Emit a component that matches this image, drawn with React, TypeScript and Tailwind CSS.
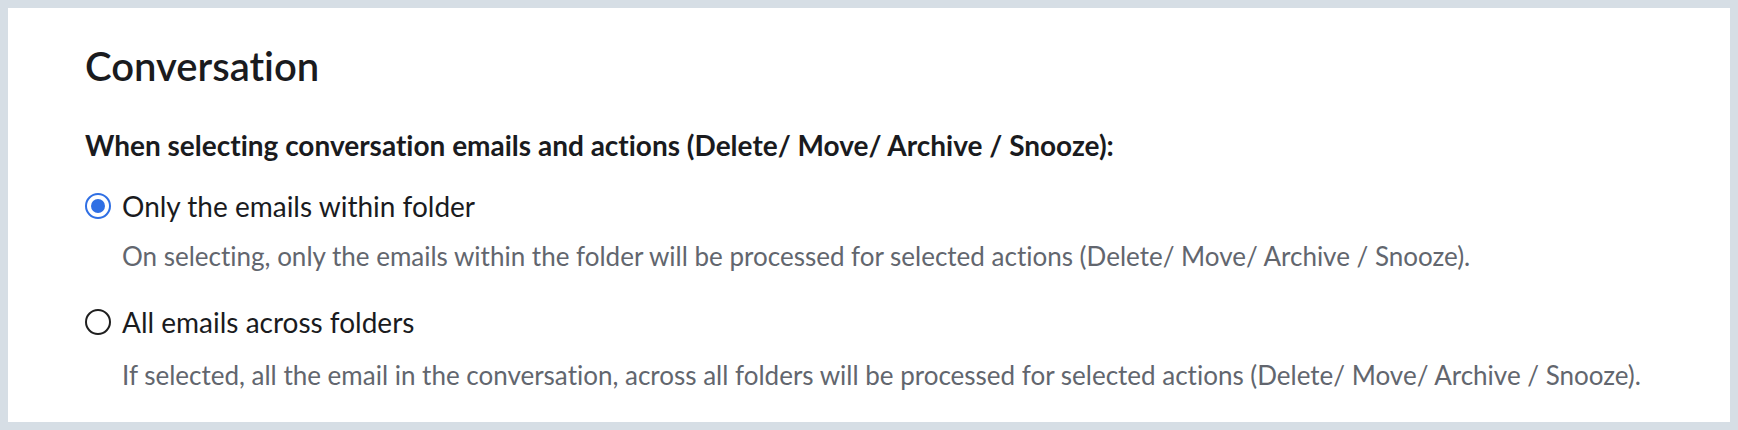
import React from "react";

function Radio({ checked }: { checked: boolean }) {
  return (
    <span
      className={
        "flex h-[26px] w-[26px] shrink-0 items-center justify-center rounded-full border-2 " +
        (checked ? "border-[#2f6fe4]" : "border-[#1f1f1f]")
      }
    >
      {checked && <span className="block h-[14px] w-[14px] rounded-full bg-[#2f6fe4]" />}
    </span>
  );
}

export default function App() {
  return (
    <div
      className="h-[430px] w-[1738px] bg-[#d6dee5] p-2 [font-variant-ligatures:none]"
      style={{ fontFamily: "Lato, 'Open Sans', sans-serif" }}
    >
      <div className="h-full w-full bg-white pl-[77px] pt-[34px]">
        <h1 className="text-[40px] font-semibold leading-[48px] text-[#1a1b1e]">Conversation</h1>
        <p className="mt-[38px] text-[28px] font-bold leading-[34px] text-[#1a1b1e]">
          When selecting conversation emails and actions (Delete/ Move/ Archive / Snooze):
        </p>
        <div className="mt-[27px] flex flex-col">
          <label className="flex items-center gap-[11px] text-[28px] leading-[34px] text-[#1a1b1e]">
            <Radio checked />
            <span>Only the emails within folder</span>
          </label>
          <p className="mt-[17px] pl-[37px] text-[26px] leading-[32px] text-[#62666e]">
            On selecting, only the emails within the folder will be processed for selected actions (Delete/ Move/ Archive / Snooze).
          </p>
          <label className="mt-[33px] flex items-center gap-[11px] text-[28px] leading-[34px] text-[#1a1b1e]">
            <Radio checked={false} />
            <span>All emails across folders</span>
          </label>
          <p className="mt-[20px] pl-[37px] text-[26px] leading-[32px] text-[#62666e]">
            If selected, all the email in the conversation, across all folders will be processed for selected actions (Delete/ Move/ Archive / Snooze).
          </p>
        </div>
      </div>
    </div>
  );
}
